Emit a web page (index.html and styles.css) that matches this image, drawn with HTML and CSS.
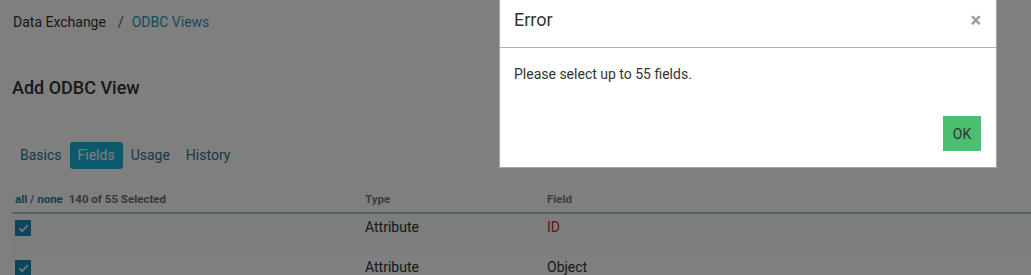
FILE: index.html
```html
<!DOCTYPE html>
<html lang="en">
<head>
    <meta charset="UTF-8">
    <meta name="viewport" content="width=device-width, initial-scale=1.0">
    <title>Add ODBC View</title>
    <link rel="stylesheet" href="styles.css">
</head>
<body>
    <div class="page">
        <div class="breadcrumb">
            <span>Data Exchange</span>
            <span class="sep">/</span>
            <a href="#">ODBC Views</a>
        </div>

        <h1 class="page-title">Add ODBC View</h1>

        <div class="tabs">
            <a class="tab" href="#">Basics</a>
            <a class="tab active" href="#">Fields</a>
            <a class="tab" href="#">Usage</a>
            <a class="tab" href="#">History</a>
        </div>

        <table class="fields-table">
            <thead>
                <tr>
                    <th class="col-check"><a href="#">all</a> / <a href="#">none</a> <span class="count">140 of 55 Selected</span></th>
                    <th class="col-type">Type</th>
                    <th>Field</th>
                </tr>
            </thead>
            <tbody>
                <tr class="striped">
                    <td><span class="checkbox"></span></td>
                    <td>Attribute</td>
                    <td class="key">ID</td>
                </tr>
                <tr>
                    <td><span class="checkbox"></span></td>
                    <td>Attribute</td>
                    <td>Object</td>
                </tr>
            </tbody>
        </table>
    </div>

    <div class="backdrop"></div>

    <div class="modal">
        <div class="modal-header">
            <span class="modal-title">Error</span>
            <span class="close">&times;</span>
        </div>
        <div class="modal-body">Please select up to 55 fields.</div>
        <div class="modal-footer">
            <button class="ok-button">OK</button>
        </div>
    </div>
</body>
</html>
```

FILE: styles.css
```css
/* Global Styles */
body {
    font-family: Roboto, "Noto Sans", Arial, sans-serif;
    color: #333;
    background-color: #fff;
    margin: 0;
    padding: 0;
    height: 275px;
    overflow: hidden;
}

a {
    text-decoration: none;
}

.page {
    padding: 0 0 0 12px;
}

.breadcrumb {
    font-size: 14px;
    line-height: 20px;
    padding: 12px 0 0 1px;
    display: flex;
    gap: 8px;
}

.breadcrumb .sep {
    color: #555;
    margin: 0 0 0 4px;
}

.breadcrumb a {
    color: #2a95bd;
}

.page-title {
    font-size: 18px;
    font-weight: 500;
    line-height: 24px;
    margin: 44px 0 0 0;
    color: #333;
}

.tabs {
    display: flex;
    margin-top: 42px;
}

.tab {
    font-size: 14px;
    line-height: 27px;
    padding: 0 8px;
    color: #2f7392;
    border-radius: 3px;
}

.tab.active {
    background-color: #1cb0dc;
    color: #fff;
}

.fields-table {
    width: 100%;
    border-collapse: collapse;
    margin-top: 24px;
}

.fields-table th {
    font-size: 11.5px;
    font-weight: 700;
    color: #7a7a7a;
    text-align: left;
    padding: 0 0 6px 0;
    line-height: 13px;
    border-bottom: 2px solid #a6c4c6;
}

.fields-table th.col-check {
    width: 350px;
    padding-left: 3px;
}

.fields-table th.col-type {
    width: 182px;
}

.fields-table th a {
    color: #2a7ba0;
}

.fields-table th .count {
    color: #6e6e6e;
    margin-left: 3px;
}

.fields-table td {
    font-size: 14px;
    line-height: 17px;
    vertical-align: top;
    padding: 6px 0 0 0;
    box-sizing: border-box;
    color: #333;
}

.fields-table tbody tr {
    height: 41px;
}

.fields-table td:first-child {
    padding-left: 3px;
}

.fields-table td:not(:first-child) {
    padding-top: 5px;
}

.fields-table tr.striped td {
    background-color: #fafafa;
}

.fields-table td.key {
    color: #c42a2a;
}

.checkbox {
    display: block;
    width: 16px;
    height: 16px;
    background-color: #168dbd;
    position: relative;
}

.checkbox::after {
    content: "";
    position: absolute;
    left: 6px;
    top: 3px;
    width: 3px;
    height: 7px;
    border: solid #d9e6ec;
    border-width: 0 2px 2px 0;
    transform: rotate(45deg);
}

/* Modal */
.backdrop {
    position: fixed;
    top: 0;
    left: 0;
    width: 100%;
    height: 100%;
    background-color: rgba(0, 0, 0, 0.5);
    z-index: 10;
}

.modal {
    position: absolute;
    top: -1px;
    left: 499px;
    width: 496px;
    background-color: #fff;
    border: 1px solid rgba(0, 0, 0, 0.35);
    z-index: 20;
}

.modal-header {
    display: flex;
    justify-content: space-between;
    align-items: flex-start;
    height: 48px;
    padding: 8px 15px 0 14px;
    border-bottom: 1px solid #a9b3bc;
    box-sizing: border-box;
}

.modal-title {
    font-size: 18px;
    line-height: 24px;
    color: #333;
}

.close {
    font-size: 20px;
    line-height: 24px;
    font-weight: 700;
    color: #9a9a9a;
}

.modal-body {
    font-size: 14px;
    line-height: 17px;
    color: #333;
    padding: 18px 14px 0 14px;
}

.modal-footer {
    display: flex;
    justify-content: flex-end;
    padding: 33px 15px 16px 15px;
}

.ok-button {
    font-family: Roboto, Arial, sans-serif;
    width: 38px;
    height: 35px;
    background-color: #4cbe70;
    color: #333;
    border: none;
    font-size: 14px;
    padding: 0;
    cursor: pointer;
}
```
